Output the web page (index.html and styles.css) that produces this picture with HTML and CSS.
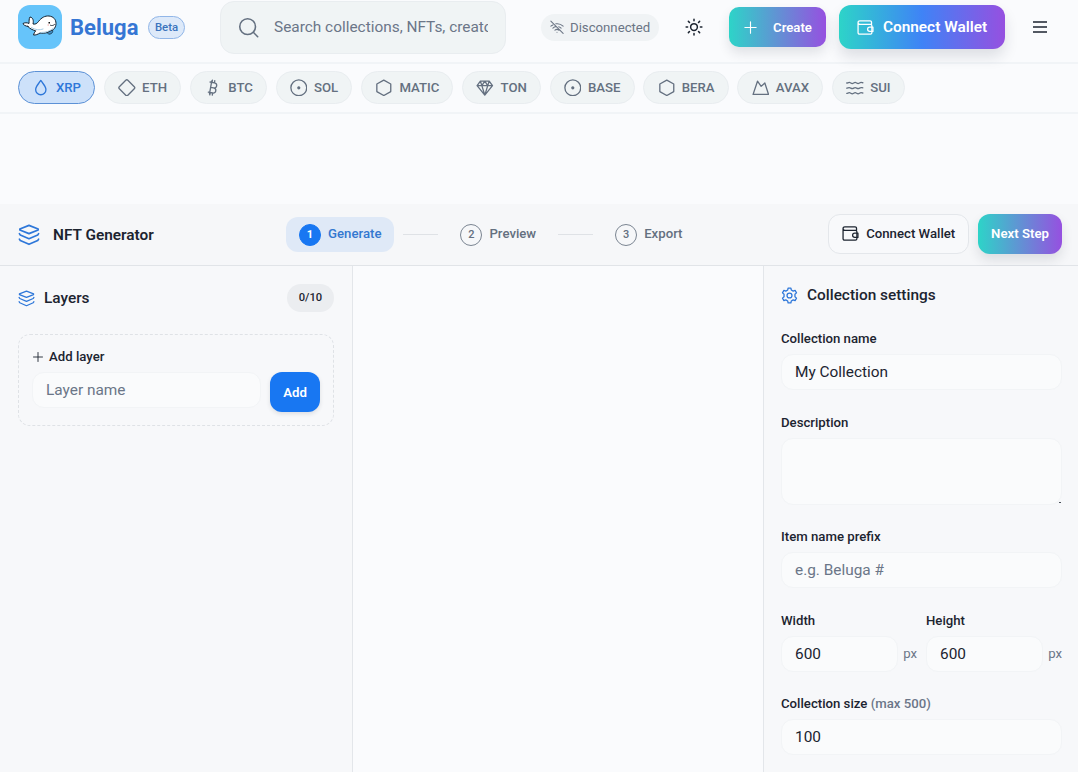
FILE: index.html
```html
<!DOCTYPE html>
<html lang="en">
  <head>
    <meta charset="UTF-8" />
    <meta name="viewport" content="width=device-width, initial-scale=1.0" />
    <title>NFT Generator - Beluga</title>
    <link rel="stylesheet" href="styles.css">
  </head>
  <body>
    <!-- Shared icons -->
    <svg class="sprite" xmlns="http://www.w3.org/2000/svg">
      <symbol id="icon-layers" viewBox="0 0 24 24">
        <path d="M12 1.500 22 5.500v1L12 10.500 2 6.500v-1Z" />
        <path d="M1.500 10.500 2.500 12 12 16l9.500-4 1-1.500M1.500 16.500l1 1.500 9.500 4.200 9.500-4.200 1-1.500" />
      </symbol>
      <symbol id="icon-wallet" viewBox="0 0 24 24">
        <path d="M20.500 7V4.500a2 2 0 0 0-2-2H4a2.500 2.500 0 0 0 0 5h15a2 2 0 0 1 2 2v10a2 2 0 0 1-2 2H3.500a2 2 0 0 1-2-2V5" />
        <path d="M22.500 11.500h-4.500a3 3 0 0 0 0 6h4.500Z" />
      </symbol>
      <symbol id="icon-hexagon" viewBox="0 0 24 24">
        <path d="m12 1.500 9.500 5.300v10.400L12 22.500l-9.500-5.300V6.800Z" />
      </symbol>
      <symbol id="icon-target" viewBox="0 0 24 24">
        <circle cx="12" cy="12" r="10.800" />
        <circle cx="12" cy="12" r="1.300" fill="currentColor" />
      </symbol>
      <symbol id="icon-plus" viewBox="0 0 24 24">
        <path d="M12 3v18M3 12h18" />
      </symbol>
    </svg>

    <header class="topbar">
      <a class="brand">
        <svg class="logo" viewBox="0 0 44 44">
          <path d="M10 21.500c-2.500-.5-4.800-1.500-5-3 1.800-1 4-1 6 0 .2-2.500-.2-4.500 1-6.500 3 .5 3.800 3.500 3 7 2.500.5 4-.5 5.500-2.500 3-4 6.500-5.800 10.500-5.500 4.500.5 7 3.500 7 7.500 0 5-4 8-8.500 9-2.500.8-5 .8-7.500.5-2 1.300-4.500 2.300-6.500 2 .3-1.500 1.200-3 2.200-4.200-3.400-.8-6-2.300-7.700-4.300Z" fill="#fff" stroke="#14212e" stroke-width="1" />
          <path d="M13.500 22.500c4 2.500 8 2.800 11.500 1.500M23 27.500c5 0 8.500-1.200 12-4" fill="none" stroke="#a5cde5" stroke-width="1" />
          <path d="M29.500 27.500 34.500 25c.8 2-.5 4.200-3.500 4.200Z" fill="#3f8fc6" stroke="#14212e" stroke-width=".7" />
          <path d="M30.500 17H32v1.500h-1.500Z" fill="#111" />
          <path d="M32.500 20.300c1.500.6 3 .2 4-.8" fill="none" stroke="#14212e" stroke-width=".9" />
          <path d="M29.500 19.500H31v1h-1.500Z" fill="#f4a7a3" />
        </svg>
        <span class="brand-name">Beluga</span>
        <span class="beta">Beta</span>
      </a>

      <div class="search">
        <svg class="search-icon" viewBox="0 0 24 24"><circle cx="11" cy="11" r="9" /><path d="m17.500 17.500 5 5" /></svg>
        <input type="text" placeholder="Search collections, NFTs, creators..." />
      </div>

      <div class="status">
        <svg viewBox="0 0 24 24"><path d="m1.500 2 21 21M5 8.500C3.500 9 2.500 9.700 1.500 10.500M10 6.500c4.500-.8 9 .7 12.500 4M5 14c1.500-1.400 3.500-2.400 5.500-2.700M15 11.500c1.500.5 3 1.400 4 2.500M8.500 17.500c2-1.700 4.500-1.800 7 0M12 21h.01" /></svg>
        <span>Disconnected</span>
      </div>

      <button class="icon-btn theme">
        <svg viewBox="0 0 24 24"><circle cx="12" cy="12" r="4.500" /><path d="M12 1.500v2M12 20.500v2M1.500 12h2M20.500 12h2M4.500 4.500 6 6M18 18l1.500 1.500M19.500 4.500 18 6M6 18l-1.500 1.500" /></svg>
      </button>

      <button class="btn btn-create">
        <svg><use href="#icon-plus" /></svg>
        <span>Create</span>
      </button>
      <button class="btn btn-wallet">
        <svg><use href="#icon-wallet" /></svg>
        <span>Connect Wallet</span>
      </button>
      <button class="icon-btn menu">
        <svg viewBox="0 0 14 12"><path d="M0 1h14M0 6h14M0 11h14" /></svg>
      </button>
    </header>

    <nav class="chains">
      <a class="chain active"><svg viewBox="0 0 24 24"><path d="M12 2c3 4.500 7 8 7 12.500a7 7 0 0 1-14 0C5 10 9 6.500 12 2Z" /></svg>XRP</a>
      <a class="chain"><svg viewBox="0 0 24 24"><path d="M10.600 1.800a2 2 0 0 1 2.800 0l8.800 8.800a2 2 0 0 1 0 2.800l-8.800 8.800a2 2 0 0 1-2.800 0l-8.800-8.800a2 2 0 0 1 0-2.800Z" /></svg>ETH</a>
      <a class="chain"><svg viewBox="0 0 24 24"><path d="M11.800 19.100c4.900.9 6.100-6 1.200-6.900m-1.200 6.900L5.900 18m5.900 1.100-.5 3m1.700-9.900-3.900-.7m3.900.7c4.900.9 6.100-6.100 1.200-7L8.300 4.100m5.900 1.100.5-3M7.500 20.300l3.100-17.700M7.900 21.500l.6-3M11 4.600l.5-3" /></svg>BTC</a>
      <a class="chain"><svg><use href="#icon-target" /></svg>SOL</a>
      <a class="chain"><svg><use href="#icon-hexagon" /></svg>MATIC</a>
      <a class="chain"><svg viewBox="0 0 24 24"><path d="M6 3h12l4.500 6L12 22 1.500 9ZM1.500 9h21M6 3l2 6 4 13 4-13 2-6M8 9l4-6 4 6" /></svg>TON</a>
      <a class="chain"><svg><use href="#icon-target" /></svg>BASE</a>
      <a class="chain"><svg><use href="#icon-hexagon" /></svg>BERA</a>
      <a class="chain"><svg viewBox="0 0 24 24"><path d="m7.500 3 5 7 5-4.500L22.500 21h-21Z" /></svg>AVAX</a>
      <a class="chain"><svg viewBox="0 0 24 24"><path d="M1 5.500c1.200 0 2-.8 3.500-.8s2.500 1.500 4 1.500 2.500-1.500 4-1.500 2.500 1.500 4 1.500 2.500-1.500 4-1.500 1.500.4 2.500.4M1 12.500c1.200 0 2-.8 3.500-.8s2.500 1.500 4 1.500 2.500-1.500 4-1.500 2.500 1.500 4 1.500 2.500-1.500 4-1.500 1.500.4 2.500.4M1 19.500c1.200 0 2-.8 3.500-.8s2.500 1.500 4 1.500 2.500-1.500 4-1.500 2.500 1.500 4 1.500 2.500-1.500 4-1.500 1.500.4 2.500.4" /></svg>SUI</a>
    </nav>

    <main class="generator">
      <div class="gen-header">
        <div class="gen-title">
          <svg><use href="#icon-layers" /></svg>
          <h1>NFT Generator</h1>
        </div>
        <div class="steps">
          <div class="step current"><span class="step-num">1</span><span class="step-name">Generate</span></div>
          <span class="step-line"></span>
          <div class="step"><span class="step-num">2</span><span class="step-name">Preview</span></div>
          <span class="step-line"></span>
          <div class="step"><span class="step-num">3</span><span class="step-name">Export</span></div>
        </div>
        <div class="gen-actions">
          <button class="btn btn-outline">
            <svg><use href="#icon-wallet" /></svg>
            <span>Connect Wallet</span>
          </button>
          <button class="btn btn-next">Next Step</button>
        </div>
      </div>

      <div class="workspace">
        <aside class="layers">
          <div class="layers-head">
            <h2><svg><use href="#icon-layers" /></svg>Layers</h2>
            <span class="count">0/10</span>
          </div>
          <div class="add-layer">
            <label for="layer-name"><svg><use href="#icon-plus" /></svg>Add layer</label>
            <div class="add-row">
              <input id="layer-name" class="field" type="text" placeholder="Layer name" />
              <button class="btn btn-add">Add</button>
            </div>
          </div>
        </aside>

        <section class="canvas"></section>

        <aside class="settings">
          <h2>
            <svg viewBox="0 0 24 24"><path d="M9.500 4.200 10 1.500h4l.5 2.700 2.700 1.600 2.700-1 2 3.500-2.200 1.900v3.600l2.200 1.900-2 3.500-2.700-1-2.700 1.600-.5 2.700h-4l-.5-2.700-2.700-1.600-2.700 1-2-3.500 2.200-1.900v-3.600L2.100 8.300l2-3.500 2.700 1Z" /><circle cx="12" cy="12" r="3.500" /></svg>
            Collection settings
          </h2>

          <div class="form-group">
            <label for="col-name">Collection name</label>
            <input id="col-name" class="field" type="text" value="My Collection" />
          </div>
          <div class="form-group">
            <label for="col-desc">Description</label>
            <div class="textarea-wrap"><textarea id="col-desc" class="field"></textarea></div>
          </div>
          <div class="form-group">
            <label for="prefix">Item name prefix</label>
            <input id="prefix" class="field" type="text" placeholder="e.g. Beluga #" />
          </div>
          <div class="size-row">
            <div class="form-group">
              <label for="width">Width</label>
              <div class="unit"><input id="width" class="field" type="text" value="600" /><span>px</span></div>
            </div>
            <div class="form-group">
              <label for="height">Height</label>
              <div class="unit"><input id="height" class="field" type="text" value="600" /><span>px</span></div>
            </div>
          </div>
          <div class="form-group">
            <label for="col-size">Collection size <span class="muted">(max 500)</span></label>
            <input id="col-size" class="field" type="text" value="100" />
          </div>
        </aside>
      </div>
    </main>
  </body>
</html>
```

FILE: styles.css
```css
* {
  box-sizing: border-box;
}

body {
  margin: 0;
  height: 772px;
  overflow: hidden;
  font-family: Roboto, "Liberation Sans", sans-serif;
  font-size: 13.2px;
  color: #1c2430;
  background-color: #fafbfd;
}

h1,
h2 {
  margin: 0;
  font-size: 15.4px;
  font-weight: 500;
  line-height: 22px;
}

h1 {
  font-weight: 600;
}

svg {
  display: block;
  flex-shrink: 0;
  fill: none;
  stroke: currentColor;
  stroke-width: 1.8;
  stroke-linecap: round;
  stroke-linejoin: round;
}

.sprite {
  display: none;
}

input,
textarea,
button {
  font-family: inherit;
}

/* Top bar */
.topbar {
  display: flex;
  align-items: center;
  height: 64px;
  padding: 0 18px 8px;
  border-bottom: 2px solid #f1f4f7;
}

.brand {
  display: flex;
  align-items: center;
  width: 202px;
}

.logo {
  width: 44px;
  height: 44px;
  border-radius: 12px;
  background-color: #66c4fa;
  stroke: none;
}

.brand-name {
  width: 69px;
  margin-left: 8px;
  font-size: 22px;
  font-weight: 700;
  color: #3576d4;
}

.beta {
  width: 37px;
  height: 23px;
  margin-left: 9px;
  border: 1px solid #91b6e8;
  border-radius: 12px;
  background-color: #dde9f9;
  color: #3b74bd;
  font-size: 11.4px;
  font-weight: 500;
  line-height: 21px;
  text-align: center;
}

.search {
  display: flex;
  align-items: center;
  width: 286px;
  height: 53px;
  padding: 0 17px;
  border: 1px solid #e9edf0;
  border-radius: 14px;
  background-color: #f0f4f5;
}

.search-icon {
  width: 21px;
  height: 21px;
  color: #647080;
}

.search input {
  width: 214px;
  margin-left: 15px;
  padding: 0;
  border: 0;
  background: none;
  font-size: 15.4px;
}

input::placeholder {
  color: #6b7688;
  opacity: 1;
}

.status {
  display: flex;
  align-items: center;
  gap: 6px;
  width: 118px;
  height: 27px;
  margin-left: 35px;
  padding-left: 9px;
  border-radius: 14px;
  background-color: #f0f3f5;
  color: #6b7585;
}

.status svg {
  width: 14px;
  height: 14px;
}

.icon-btn {
  padding: 0;
  border: 0;
  background: none;
  color: #1c2430;
}

.theme {
  margin-left: 26px;
}

.theme svg {
  width: 18px;
  height: 18px;
  stroke-width: 2;
}

.menu {
  margin-left: 28px;
}

.menu svg {
  width: 14px;
  height: 12px;
  stroke-width: 1.5;
  stroke-linecap: butt;
}

.btn {
  display: flex;
  align-items: center;
  justify-content: center;
  height: 40px;
  padding: 0;
  border: 0;
  border-radius: 12px;
  color: #fff;
  font-size: 13.2px;
  font-weight: 600;
  white-space: nowrap;
}

.btn-create,
.btn-next {
  background-image: linear-gradient(90deg, #2dd4c8, #9650e0);
  box-shadow: 0 6px 12px rgba(30, 40, 60, 0.12);
}

.btn-create {
  gap: 15px;
  width: 97px;
  margin-left: 26px;
  border-radius: 10px;
}

.btn-create svg {
  width: 15px;
  height: 15px;
}

.btn-wallet {
  gap: 9px;
  width: 166px;
  height: 44px;
  margin-left: 13px;
  background-image: linear-gradient(90deg, #2dd4c8, #3f83f6 50%, #9650e0);
  box-shadow: 0 8px 14px rgba(30, 40, 60, 0.13);
  font-size: 15.4px;
}

.btn-wallet svg {
  width: 17px;
  height: 17px;
}

/* Chain filter */
.chains {
  display: flex;
  gap: 8.8px;
  height: 50px;
  padding: 7px 17.6px 0;
  border-bottom: 2px solid #f1f4f7;
}

.chain {
  display: flex;
  align-items: center;
  gap: 6.6px;
  height: 33px;
  padding: 0 13.1px;
  border: 1px solid #e9edf0;
  border-radius: 17px;
  background-color: #f0f4f5;
  color: #647080;
  font-weight: 500;
}

.chain svg {
  width: 17.6px;
  height: 17.6px;
}

.chain.active {
  border-color: #5c91d6;
  background-color: #cde1fa;
  color: #2e77d9;
}

/* Generator */
.generator {
  margin-top: 90px;
}

.gen-header {
  display: flex;
  align-items: center;
  height: 62px;
  padding: 0 16px 0 18px;
  border-bottom: 1px solid #e1e4e8;
  background-color: #f6f7f9;
}

.gen-title {
  display: flex;
  align-items: center;
  gap: 13px;
  width: 268px;
}

.gen-title svg {
  width: 22px;
  height: 22px;
  color: #2e77d9;
}

.steps {
  display: flex;
  align-items: center;
}

.step {
  display: flex;
  align-items: center;
  gap: 7px;
  height: 35px;
  padding: 0 13px;
  border-radius: 12px;
  color: #647080;
  font-weight: 500;
}

.step-name {
  padding-bottom: 2px;
}

.step-num {
  width: 22px;
  height: 22px;
  border: 1px solid #7b8592;
  border-radius: 50%;
  font-size: 11px;
  line-height: 20px;
  text-align: center;
}

.step.current {
  background-color: #dfe9f7;
  color: #3478d0;
}

.current .step-num {
  border-color: #1877f2;
  background-color: #1877f2;
  color: #fff;
  font-weight: 700;
}

.step-line {
  width: 35px;
  height: 1px;
  margin: 0 9px;
  background-color: #dfe2e6;
}

.gen-actions {
  display: flex;
  gap: 8.8px;
  margin-left: auto;
}

.gen-actions .btn {
  margin-bottom: 1px;
  padding-bottom: 1px;
}

.btn-outline {
  gap: 7px;
  width: 141px;
  border: 1px solid #e4e7eb;
  background-color: #f8f9fb;
  color: #1c2430;
  font-weight: 500;
}

.btn-outline svg {
  width: 17px;
  height: 17px;
}

.btn-next {
  width: 84px;
}

.workspace {
  display: grid;
  grid-template-columns: 353px 1fr 315px;
  height: 506px;
}

.layers {
  padding: 18px;
  border-right: 1px solid #e3e6ea;
  background-color: #f7f8fa;
}

.layers-head {
  display: flex;
  align-items: center;
  justify-content: space-between;
  margin-bottom: 22px;
}

.layers h2,
.settings h2 {
  display: flex;
  align-items: center;
  gap: 9px;
}

h2 svg {
  width: 17px;
  height: 17px;
  color: #2e77d9;
}

.count {
  width: 47px;
  height: 28px;
  border-radius: 14px;
  background-color: #ebedf0;
  font-size: 11.2px;
  font-weight: 500;
  line-height: 28px;
  text-align: center;
}

.add-layer {
  height: 92px;
  padding: 13px;
  border: 1px dashed #dfe2e6;
  border-radius: 12px;
}

label {
  display: block;
  font-weight: 500;
  line-height: 18px;
}

.add-layer label {
  display: flex;
  align-items: center;
  gap: 5px;
}

.add-layer label svg {
  width: 12px;
  height: 12px;
}

.add-row {
  display: flex;
  gap: 9px;
  margin-top: 6px;
}

.field {
  display: block;
  width: 100%;
  height: 36px;
  padding: 0 13px;
  border: 1px solid #f2f4f6;
  border-radius: 12px;
  outline: none;
  background-color: #fafbfc;
  color: #1c2430;
  font-size: 15.4px;
}

.btn-add {
  flex-shrink: 0;
  width: 50px;
  background-color: #1877f2;
  box-shadow: 0 2px 4px rgba(30, 40, 60, 0.12);
}

.settings {
  padding: 18px 16px 0 17px;
  border-left: 1px solid #e3e6ea;
  background-color: #f7f8fa;
}

.settings h2 {
  margin-bottom: 24px;
}

.form-group {
  margin-bottom: 23.6px;
}

.form-group label {
  margin-bottom: 6px;
}

.textarea-wrap {
  position: relative;
}

/* Corner of the resize grip */
.textarea-wrap::after {
  content: "";
  position: absolute;
  right: 1px;
  bottom: 2px;
  width: 2px;
  height: 1px;
  background-color: #4a515a;
}

textarea.field {
  height: 67px;
  resize: none;
}

.size-row {
  display: grid;
  grid-template-columns: 1fr 1fr;
  gap: 9px;
}

.unit {
  display: flex;
  align-items: center;
  gap: 5px;
  color: #6b7688;
}

.unit .field {
  flex: 1;
  min-width: 0;
}

.muted {
  color: #6b7688;
}
```
